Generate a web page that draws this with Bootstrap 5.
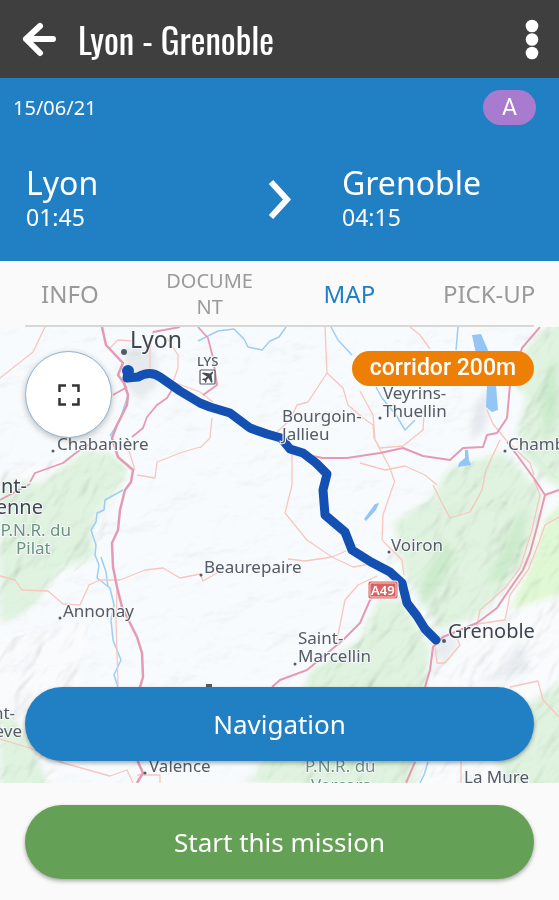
<!DOCTYPE html>
<html lang="en">
<head>
<meta charset="utf-8">
<meta name="viewport" content="width=device-width, initial-scale=1">
<title>Lyon - Grenoble</title>
<link href="https://cdn.jsdelivr.net/npm/bootstrap@5.3.0/dist/css/bootstrap.min.css" rel="stylesheet">
<style>
  body { font-family: "Noto Sans", sans-serif; background: #fafafa; }
  .app-bar { background: #3f3f3f; height: 78px; padding: 0 16px 0 20px; }
  .app-title { font-family: Oswald, "Roboto Condensed", "Noto Sans", sans-serif; font-size: 35px; line-height: 48px; }
  .icon-btn { line-height: 0; }
  .trip { background: #217fc4; height: 183px; padding-top: 12px; }
  .trip-meta { padding: 0 23px 0 13px; font-size: 20px; line-height: 35px; }
  .trip-kind { background: #a87bcf; width: 53px; height: 35px; font: 400 23px/35px Roboto, sans-serif; }
  .trip-legs { display: grid; grid-template-columns: 1fr 125px 1fr; padding: 40px 26px 0; }
  .leg-city { font-size: 32px; line-height: 36px; }
  .leg-time { font-size: 23px; line-height: 32px; }
  .tabs a { height: 64px; padding: 2px 16px 0; font-size: 24px; line-height: 26px; color: #9a9a9a; }
  .tabs a.active { color: #217fc4; }
  .tabs a.tab-long { font-size: 20px; padding: 2px 22px 0; word-break: break-all; }
  .tab-rule { height: 2px; margin: 0 25px; background: #d6d8d6; }
  .map-area { min-height: 456px; background: #f3f7f9; }
  .map-overlay { padding: 24px 25px 22px; }
  .round-btn { width: 87px; height: 87px; background: #fff; border: 1px solid #8fb3d2; box-shadow: 0 2px 6px rgba(0,0,0,.25); }
  .corridor { background: #ee7f05; height: 35px; padding: 0 18px; font: 500 23px/34px Roboto, sans-serif; }
  .wide-btn { height: 74px; font-size: 26px; color: #fff; box-shadow: 0 2px 4px rgba(0,0,0,.35); }
  .wide-btn:hover { color: #fff; }
  .nav-btn, .nav-btn:hover { background: #217fc4; }
  .start-btn, .start-btn:hover { background: #64a056; }
  .actions { padding: 22px 25px 21px; }
  .map-svg text { font-family: "Noto Sans", sans-serif; font-size: 17px; fill: #555b66; stroke: #f7fafb; stroke-width: 2px; paint-order: stroke; }
  .map-svg .big { font-size: 23px; fill: #3f4550; }
  .map-svg .mid { font-size: 20px; fill: #3f4550; }
  .map-svg .nature { fill: #6c9180; }
  .map-svg .tiny { font-size: 13px; font-weight: 500; }
  .map-svg .shield { font-size: 13px; font-weight: 600; fill: #fff; stroke: none; }
</style>
<script src="https://cdn.jsdelivr.net/npm/bootstrap@5.3.0/dist/js/bootstrap.bundle.min.js" defer></script>
</head>
<body>
<div class="d-flex flex-column min-vh-100">
  <header class="app-bar d-flex align-items-center text-white">
    <button class="icon-btn btn p-0 border-0" type="button" aria-label="Back">
      <svg width="38" height="38" viewBox="0 0 38 38" fill="none" stroke="#fff" stroke-width="6" stroke-linecap="round" stroke-linejoin="round"><path d="M33 19H6M20 6 6 19l14 14"/></svg>
    </button>
    <h1 class="app-title mb-0 ms-3 ps-1 me-auto fw-normal">Lyon - Grenoble</h1>
    <button class="icon-btn btn p-0 border-0" type="button" aria-label="More options">
      <svg width="22" height="42" viewBox="0 0 22 42" fill="#fff"><circle cx="11" cy="8" r="6.3"/><circle cx="11" cy="21.5" r="6.3"/><circle cx="11" cy="35" r="6.3"/></svg>
    </button>
  </header>

  <section class="trip text-white">
    <div class="trip-meta d-flex justify-content-between">
      <span>15/06/21</span>
      <span class="trip-kind rounded-pill text-center">A</span>
    </div>
    <div class="trip-legs">
      <div>
        <div class="leg-city">Lyon</div>
        <div class="leg-time">01:45</div>
      </div>
      <div class="text-center pt-2">
        <svg width="28" height="48" viewBox="0 0 28 48" fill="none" stroke="#fff" stroke-width="6"><path d="M5 9 21 26.500 5 44"/></svg>
      </div>
      <div>
        <div class="leg-city">Grenoble</div>
        <div class="leg-time">04:15</div>
      </div>
    </div>
  </section>

  <nav class="tabs">
    <div class="row row-cols-4 g-0 text-center">
      <a class="col d-flex align-items-center justify-content-center text-decoration-none" href="#info">INFO</a>
      <a class="col tab-long d-flex align-items-center justify-content-center text-decoration-none" href="#document">DOCUMENT</a>
      <a class="col active d-flex align-items-center justify-content-center text-decoration-none" href="#map" aria-current="page">MAP</a>
      <a class="col d-flex align-items-center justify-content-center text-decoration-none text-nowrap" href="#pickup">PICK-UP</a>
    </div>
    <div class="tab-rule"></div>
  </nav>

  <main class="map-area position-relative flex-grow-1 overflow-hidden" id="map">
    <svg class="map-svg position-absolute top-0 start-0 w-100 h-100" viewBox="0 327 559 456" preserveAspectRatio="xMidYMid slice" role="img" aria-label="Route from Lyon to Grenoble">
      <defs>
        <filter id="relief" x="0" y="0" width="100%" height="100%">
          <feTurbulence type="fractalNoise" baseFrequency="0.022 0.034" numOctaves="4" seed="8"/>
          <feDiffuseLighting lighting-color="#fff" surfaceScale="6" diffuseConstant="1.14"><feDistantLight azimuth="225" elevation="62"/></feDiffuseLighting>
        </filter>
        <filter id="ridges" x="0" y="0" width="100%" height="100%">
          <feTurbulence type="fractalNoise" baseFrequency="0.02 0.045" numOctaves="3" seed="4"/>
          <feDiffuseLighting lighting-color="#fff" surfaceScale="9" diffuseConstant="1.14"><feDistantLight azimuth="250" elevation="62"/></feDiffuseLighting>
        </filter>
        <filter id="soft" x="-10%" y="-10%" width="120%" height="120%"><feGaussianBlur stdDeviation="3"/></filter>
        <clipPath id="hills"><path d="M393 523 430 500 450 468 503 452 559 480V783H250L300 690 360 640 380 600ZM547 327 513 382 527 398 517 432 559 480V327ZM0 470 100 450 125 475 95 557 0 623ZM0 640 90 620 60 783H0Z"/></clipPath>
      </defs>
      <rect x="0" y="327" width="559" height="456" fill="#f8fbfd"/>
      <g fill="#d9f1d9" filter="url(#soft)">
        <path d="M0 480 40 483 70 462 87 450 110 453 127 468 123 482 97 513 91 530 95 557 60 570 37 600 17 617 0 623Z"/>
        <path d="M550 325 527 348 513 382 527 398 517 432 522 450 545 480 565 490V320Z"/>
        <path d="M450 468 483 458 503 452 530 480 542 497 535 530 524 565 480 615 440 630 405 575 393 523 430 500Z"/>
        <path d="M380 598 360 640 310 672 300 700 250 783 415 790 425 690 430 650 403 600Z"/>
        <path d="M565 500 545 520 533 560 510 610 565 592Z" fill="#d9f7cb"/>
        <path d="M565 680 525 705 490 745 510 790H565Z"/>
        <path d="M0 708 30 738 50 790H0Z"/>
      </g>
      <g fill="#b4e0b4" opacity=".6" filter="url(#soft)">
        <path d="M528 505 515 520 500 555 486 583 505 578 522 545Z"/>
        <path d="M445 540 425 575 418 610 438 588 455 555Z"/>
        <path d="M555 355 540 395 545 440 559 415Z"/>
      </g>
      <g fill="#e5eaef" filter="url(#soft)">
        <path d="M125 345 155 350 158 385 140 400 125 385Z"/>
        <path d="M475 405 490 385 485 430 470 440Z"/>
        <path d="M440 630 460 640 445 665 430 650ZM520 640 500 670 480 685 530 670Z"/>
      </g>
      <rect x="0" y="327" width="559" height="456" filter="url(#relief)" opacity=".14" style="mix-blend-mode:multiply"/>
      <g clip-path="url(#hills)"><rect x="-250" y="150" width="1060" height="820" transform="rotate(-52 280 555)" filter="url(#ridges)" opacity=".18" style="mix-blend-mode:multiply"/></g>

      <g fill="#93c5f5">
        <path d="M472 335l9-1 7 16-1 4h-11ZM487 385h9l2 25-6 2-6-5ZM465 450h3l1 10 2 5-13 2 1-4 6-5ZM364 519l11-15 4-1-3 7-10 11Z"/>
      </g>
      <g fill="none" stroke="#9bcdf6" stroke-width="1.500" stroke-linejoin="round">
        <path d="M123 490 105 500 104 510 97 513 96 522 91 530 96 545 95 555 99 565 97 578 110 588 114 605 111 620 113 640 121 660 114 675 118 687"/>
        <path d="M128 395 120 420 110 436M198 341 218 331 234 329 244 339 248 347 262 350 270 341 279 337 286 327M331 327 338 340 352 355M458 327 456 350M376 387 382 398 396 415 405 430 415 420"/>
        <path d="M101 557 106 572 108 587M428 762 424 775 420 783"/>
      </g>
      <g fill="none" stroke="#f8c6be" stroke-width="1.300" stroke-linejoin="round">
        <path d="M45 327 33 352 0 378M110 348 118 340 135 341M153 332 150 350 150 368M167 338 178 355 178 368 173 382 200 392 213 402"/>
        <path d="M200 447 180 453 157 462 155 478 137 475M128 448 135 470M212 418 210 438 200 448M292 452 292 485 285 513 307 540 332 557 353 567 377 563"/>
        <path d="M325 327 327 373 308 402 297 405 290 420 277 432M327 373 343 388 348 405 363 418 373 425 374 438 380 448 403 446 423 430 424 415M410 327 420 335 430 349M360 391 373 415 375 440 390 468 395 483M360 463 385 470 405 466 425 475 437 485"/>
        <path d="M487 410 493 424 506 440 530 463 534 475M500 440 486 470 482 490 470 512 450 518 443 505 433 485M394 483 383 515 382 540 402 560 404 575"/>
        <path d="M0 576 15 580 22 590 48 591 63 604 80 605 89 585 100 580 120 580 145 570 163 568 180 578 200 574 203 581 217 573M288 559 305 561 332 557 346 551"/>
        <path d="M534 480 540 495 532 530 520 568 505 588 480 610 476 630M559 517 545 525 538 545 528 570 510 595 505 620 470 625"/>
        <path d="M377 576 358 585 345 600 337 640M117 590 116 620 118 685M435 647 437 663 445 663 460 645 456 636M510 687 538 681 543 700 559 717M0 739 30 748 60 762 85 769 110 776 127 770 133 783M137 775 160 775 160 783M461 760V783"/>
      </g>
      <g fill="none" stroke="#e59ab3" stroke-width="2" stroke-linejoin="round">
        <path d="M102 327 106 345 123 363 118 375 124 383 128 395 127 405 117 425 112 438 118 457 133 470 131 482 125 490 120 510 118 530 112 543 113 567 117 587 122 607 137 637 142 653 143 677 140 687 138 762 143 773 137 783" stroke-width="2.500"/>
        <path d="M30 482 35 473 63 463 77 452 90 444M0 500 30 484M113 395 127 387M132 437 143 428 147 417 157 405 167 398 173 388M153 332 180 327M198 327 208 338 213 358 217 385 203 395" stroke-width="1.800"/>
        <path d="M307 455 323 458 347 458 380 453 403 448 423 456 450 460 463 448 483 447 487 435 497 433 507 418 510 385 522 348 540 327M507 442 517 455 533 477 545 495 559 490M545 495 537 527 530 553 523 570 507 593 497 608 477 623 443 637 433 647 430 670 425 687"/>
        <path d="M382 590 370 600 360 623 343 640 307 670 280 680 272 687M415 762 406 783"/>
      </g>

      <path d="M128 371 127 378 138 377Q150 370 160 377L180 391 200 403 210 407 230 413 250 428 267 434 281 438 290 449 303 453 316 463 327 474 323 490 325 515 345 532 352 550 371 562 390 572 402 583 407 603 417 616 425 629 436 640" fill="none" stroke="#1350b2" stroke-width="9" stroke-linecap="round" stroke-linejoin="round"/>
      <circle cx="128" cy="371" r="6" fill="#1350b2"/>

      <g fill="#555b66">
        <circle cx="124" cy="352" r="3"/><circle cx="53" cy="451" r="1.500"/><circle cx="60" cy="618" r="1.500"/><circle cx="201" cy="575" r="1.500"/><circle cx="380" cy="418" r="1.500"/><circle cx="505" cy="451" r="1.500"/><circle cx="389" cy="552" r="1.500"/><circle cx="444" cy="641" r="2"/><circle cx="295" cy="664" r="1.500"/><circle cx="145" cy="773" r="1.500"/><path d="M206 684h6v4h-6Z"/>
      </g>
      <rect x="200" y="370" width="15" height="14" rx="1" fill="#fff" stroke="#555b66" stroke-width="1.200"/>
      <path d="M213 371.500c-1 0-2 1-3 2l-7-1-1 1 5 3-2 2-2 0-1 1 2.500 1 1 2.500 1-1 0-2 2-2 3 5 1-1-1-7c1-1 2-2.500 1.500-3.500Z" fill="#454b55"/>
      <rect x="368" y="581" width="30" height="18" rx="2" fill="#da6161" stroke="#fff"/>
      <rect x="370" y="583" width="26" height="14" rx="1" fill="none" stroke="#f6caca"/>
      <text class="shield" x="371" y="595">A49</text>

      <text class="big" x="130" y="348">Lyon</text>
      <text class="tiny" x="197" y="366">LYS</text>
      <text x="57" y="450">Chabanière</text>
      <text x="282" y="422">Bourgoin-</text>
      <text x="282" y="440">Jallieu</text>
      <text x="383" y="399">Veyrins-</text>
      <text x="383" y="417">Thuellin</text>
      <text x="508" y="450">Chambéry</text>
      <text class="mid" x="27" y="493" text-anchor="end">Saint-</text>
      <text class="mid" x="43" y="514" text-anchor="end">Étienne</text>
      <text class="nature" x="71" y="536" text-anchor="end">P.N.R. du</text>
      <text class="nature" x="16" y="554">Pilat</text>
      <text x="204" y="573">Beaurepaire</text>
      <text x="63" y="617">Annonay</text>
      <text x="391" y="551">Voiron</text>
      <text class="mid" x="448" y="638">Grenoble</text>
      <text x="298" y="644">Saint-</text>
      <text x="298" y="662">Marcellin</text>
      <text x="15" y="719" text-anchor="end">Saint-</text>
      <text x="22" y="737" text-anchor="end">Agrève</text>
      <text x="149" y="772">Valence</text>
      <text class="nature" x="305" y="772">P.N.R. du</text>
      <text class="nature" x="311" y="791">Vercors</text>
      <text x="464" y="783">La Mure</text>
    </svg>

    <div class="map-overlay position-absolute top-0 start-0 w-100 h-100 d-flex flex-column justify-content-between">
      <div class="d-flex justify-content-between align-items-start">
        <button class="round-btn btn rounded-circle p-0" type="button" aria-label="Full screen">
          <svg width="24" height="24" viewBox="0 0 24 24" fill="none" stroke="#333" stroke-width="2.500"><path d="M2.500 9V2.500H9M15 2.500h6.500V9M21.500 15v6.500H15M9 21.500H2.500V15"/></svg>
        </button>
        <span class="corridor rounded-pill text-white">corridor 200m</span>
      </div>
      <button class="wide-btn nav-btn btn rounded-pill border-0 w-100" type="button">Navigation</button>
    </div>
  </main>

  <footer class="actions">
    <button class="wide-btn start-btn btn rounded-pill border-0 w-100" type="button">Start this mission</button>
  </footer>
</div>
</body>
</html>
